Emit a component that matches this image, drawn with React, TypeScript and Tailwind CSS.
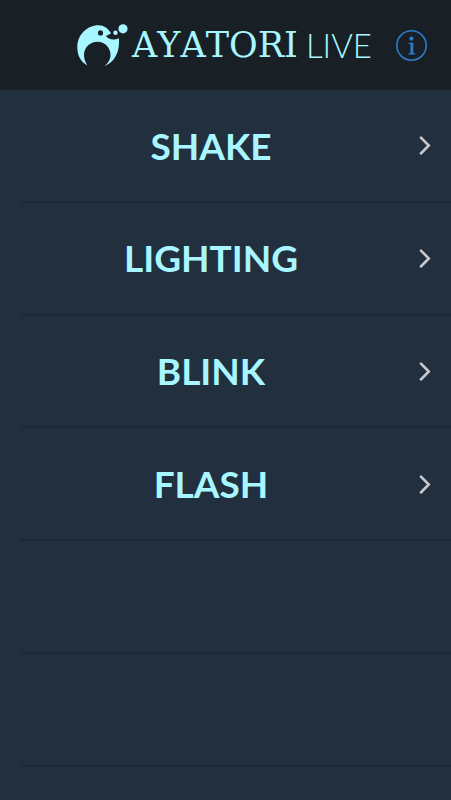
const modes = ['SHAKE', 'LIGHTING', 'BLINK', 'FLASH']
const emptyRows = [1, 2]

function BirdIcon() {
    return (
        <svg viewBox="0 0 52 44" className="h-11 w-[52px] shrink-0" fill="#a8f6ff" aria-hidden="true">
            <path
                fillRule="evenodd"
                d="M11.500 42.500C5 39 1.300 33 1.300 24C1.300 12 11 2.300 22.500 2.300C28 2.300 31.500 5 35 10.200C34 11.300 32 11.800 30 13C32 16.500 38 17.500 43 15.200C44 29 38.500 39.500 28 43.300C32 40.500 34.500 36.500 34.500 32C34.500 24.500 28.700 18.800 21.500 18.800C14 18.800 8 24.500 8 32C8 36 9.500 40 11.500 42.500ZM24.500 7.300a2.600 2.600 0 1 0 0 5.200a2.600 2.600 0 1 0 0-5.200Z"
            />
            <circle cx="39.500" cy="9.800" r="2.200" />
            <circle cx="47" cy="5.800" r="4.600" />
        </svg>
    )
}

function Header() {
    return (
        <header className="flex h-[90px] items-center justify-end bg-[#182026] pr-6">
            <h1 className="flex items-center text-[#a8f6ff]">
                <BirdIcon />
                <span className="ml-1 font-['DejaVu_Serif',serif] text-[35px] leading-none [font-kerning:none]">
                    AYATORI
                </span>
                <span className="ml-2 font-['Lato',sans-serif] text-[33px] leading-none font-light">LIVE</span>
            </h1>
            <button
                type="button"
                aria-label="Information"
                className="ml-6 size-[31px] shrink-0 text-[#2b7cc9]"
            >
                <svg viewBox="0 0 31 31" className="size-full" fill="currentColor" aria-hidden="true">
                    <circle cx="15.500" cy="15.500" r="14.700" fill="none" stroke="currentColor" strokeWidth="1.600" />
                    <circle cx="15.400" cy="8.600" r="2.100" />
                    <path d="M12.400 12.700h4.900v10.400l2 .5v.9h-6.900v-.9l2-.5v-9.100l-2-.4Z" />
                </svg>
            </button>
        </header>
    )
}

function Chevron() {
    return (
        <svg
            viewBox="0 0 12 20"
            className="h-5 w-3 shrink-0"
            fill="none"
            stroke="#c7c7cc"
            strokeWidth="2.600"
            aria-hidden="true"
        >
            <path d="M1.200 1.800L9.800 10.500L1.200 19.200" />
        </svg>
    )
}

export default function App() {
    return (
        <div className="min-h-screen bg-[#222f3e]">
            <Header />
            <main>
                <ul className="pl-[21px]">
                    {modes.map((mode) => (
                        <li key={mode} className="h-[25vw] border-b-2 border-[#1d2835]">
                            <button type="button" className="flex size-full items-center pr-5 text-[#a8f6ff]">
                                <span className="flex-1 pr-[18px] text-center font-['Lato',sans-serif] text-[37px] font-bold">
                                    {mode}
                                </span>
                                <Chevron />
                            </button>
                        </li>
                    ))}
                    {emptyRows.map((row) => (
                        <li key={row} className="h-[25vw] border-b-2 border-[#1d2835]" />
                    ))}
                </ul>
            </main>
        </div>
    )
}
